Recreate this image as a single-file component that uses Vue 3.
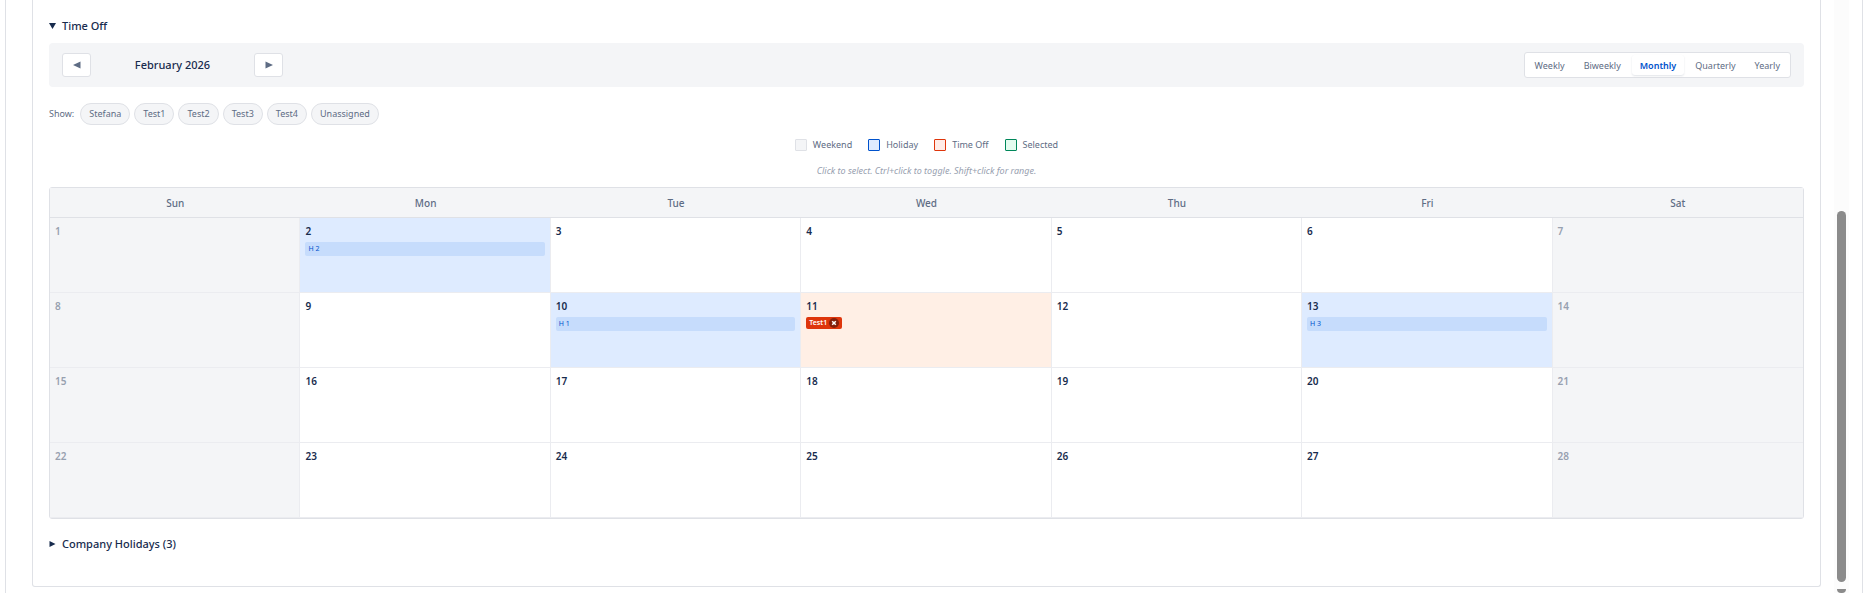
<script setup>
import { ref } from 'vue'

const views = ['Weekly', 'Biweekly', 'Monthly', 'Quarterly', 'Yearly']
const view = ref('Monthly')
const people = ['Stefana', 'Test1', 'Test2', 'Test3', 'Test4', 'Unassigned']
const legend = [
  { label: 'Weekend', kind: 'weekend' },
  { label: 'Holiday', kind: 'holiday' },
  { label: 'Time Off', kind: 'timeoff' },
  { label: 'Selected', kind: 'selected' },
]
const weekdays = ['Sun', 'Mon', 'Tue', 'Wed', 'Thu', 'Fri', 'Sat']
const holidays = { 2: 'H 2', 10: 'H 1', 13: 'H 3' }
const timeOff = ref({ 11: 'Test1' })

const weeks = [0, 1, 2, 3].map((w) => weekdays.map((_, d) => w * 7 + d + 1))

function dayClass(day, column) {
  return {
    weekend: column === 0 || column === 6,
    holiday: day in holidays,
    timeoff: day in timeOff.value,
  }
}
</script>

<template>
  <div class="page">
    <div class="panel">
      <main class="card">
        <details open>
          <summary>
            <svg class="marker" viewBox="0 0 8 8" aria-hidden="true"><path d="M0 1h7L3.5 7z" /></svg>
            Time Off
          </summary>

          <div class="toolbar">
            <div class="period">
              <button class="step" type="button" aria-label="Previous month">
                <svg viewBox="0 0 8 8" aria-hidden="true"><path d="M7.5 0.5v7L0 4z" /></svg>
              </button>
              <span class="month">February 2026</span>
              <button class="step" type="button" aria-label="Next month">
                <svg viewBox="0 0 8 8" aria-hidden="true"><path d="M0.5 0.5v7L8 4z" /></svg>
              </button>
            </div>
            <div class="views">
              <button
                v-for="v in views"
                :key="v"
                type="button"
                :class="{ active: v === view }"
                @click="view = v"
              >{{ v }}</button>
            </div>
          </div>

          <div class="filters">
            <span class="caption">Show:</span>
            <button v-for="p in people" :key="p" class="chip" type="button">{{ p }}</button>
          </div>

          <div class="legend">
            <span v-for="l in legend" :key="l.kind" class="key">
              <i class="swatch" :class="l.kind"></i>{{ l.label }}
            </span>
          </div>
          <p class="hint">Click to select. Ctrl+click to toggle. Shift+click for range.</p>

          <table class="calendar">
            <thead>
              <tr>
                <th v-for="d in weekdays" :key="d" scope="col">{{ d }}</th>
              </tr>
            </thead>
            <tbody>
              <tr v-for="(week, w) in weeks" :key="w">
                <td v-for="(day, c) in week" :key="day" :class="dayClass(day, c)">
                  <div class="number">{{ day }}</div>
                  <div v-if="holidays[day]" class="event">{{ holidays[day] }}</div>
                  <div v-if="timeOff[day]" class="badge">
                    {{ timeOff[day] }}
                    <button type="button" aria-label="Remove time off">
                      <svg viewBox="0 0 10 10" aria-hidden="true"><path d="M3.2 3.2l3.6 3.6M6.8 3.2l-3.6 3.6" /></svg>
                    </button>
                  </div>
                </td>
              </tr>
            </tbody>
          </table>
        </details>

        <details class="company">
          <summary>
            <svg class="marker" viewBox="0 0 8 8" aria-hidden="true"><path d="M0.5 1v6l6-3z" /></svg>
            Company Holidays (3)
          </summary>
        </details>
      </main>

      <div class="scroll" aria-hidden="true">
        <div class="thumb"></div>
        <div class="down"></div>
      </div>
    </div>
  </div>
</template>

<style>
body {
  margin: 0;
  overflow: hidden;
  background: #fff;
}
</style>

<style scoped>
.page {
  box-sizing: border-box;
  height: 100vh;
  padding: 0 3px 0 5px;
  font-family: "Noto Sans", "Open Sans", sans-serif;
  font-size: 9px;
  line-height: 14px;
  color: #5e6c84;
}
button {
  font: inherit;
  color: inherit;
  cursor: pointer;
}
.panel {
  box-sizing: border-box;
  display: flex;
  height: 100%;
  border: solid #dfe1e6;
  border-width: 0 1px;
  padding: 0 13px 0 26px;
}
.card {
  box-sizing: border-box;
  flex: 1;
  align-self: flex-start;
  border: 1px solid #dfe1e6;
  border-top: 0;
  border-radius: 0 0 3px 3px;
  padding: 18px 16px 34px;
}
summary {
  display: flex;
  align-items: center;
  gap: 5px;
  height: 16px;
  list-style: none;
  font-size: 11px;
  font-weight: 500;
  color: #172b4d;
  cursor: pointer;
}
.marker {
  width: 8px;
  height: 8px;
  fill: #172b4d;
}
.toolbar {
  display: flex;
  justify-content: space-between;
  align-items: center;
  margin-top: 9px;
  padding: 9px 13px;
  border-radius: 4px;
  background: #f4f5f7;
}
.period {
  display: flex;
  align-items: center;
  gap: 12px;
}
.step {
  display: flex;
  align-items: center;
  justify-content: center;
  width: 29px;
  height: 24px;
  padding: 0;
  border: 1px solid #dfe1e6;
  border-radius: 3px;
  background: #fff;
}
.step svg {
  width: 8px;
  height: 8px;
  fill: #5e6c84;
}
.month {
  width: 139px;
  text-align: center;
  font-size: 11px;
  font-weight: 500;
  color: #172b4d;
}
.views {
  display: flex;
  gap: 3px;
  padding: 2px;
  border: 1px solid #dfe1e6;
  border-radius: 3px;
  background: #fff;
}
.views button {
  height: 20px;
  padding: 1px 8px 0;
  border: 0;
  border-radius: 3px;
  background: none;
}
.views .active {
  font-weight: 600;
  color: #0052cc;
  background: #fff;
  box-shadow: 0 1px 2px rgba(9, 30, 66, 0.12);
}
.filters {
  display: flex;
  align-items: center;
  gap: 4px;
  margin-top: 16px;
}
.caption {
  margin-right: 2px;
}
.chip {
  height: 22px;
  padding: 0 8px;
  border: 1px solid #dfe1e6;
  border-radius: 11px;
  background: #f4f5f7;
}
.legend {
  display: flex;
  justify-content: center;
  gap: 16px;
  margin-top: 13px;
}
.key {
  display: flex;
  align-items: center;
  gap: 6px;
}
.swatch {
  box-sizing: border-box;
  width: 12px;
  height: 12px;
  border: 1px solid #dfe1e6;
  border-radius: 1px;
  background: #f4f5f7;
}
.swatch.holiday {
  border-color: #0052cc;
  background: #deebff;
}
.swatch.timeoff {
  border-color: #de350b;
  background: #ffebe6;
}
.swatch.selected {
  border-color: #00875a;
  background: #e3fcef;
}
.hint {
  margin: 12px 0 9px;
  text-align: center;
  font-style: italic;
  color: #97a0af;
}
.calendar {
  width: 100%;
  table-layout: fixed;
  border-collapse: separate;
  border-spacing: 0;
  border: 1px solid #dfe1e6;
  border-radius: 3px;
}
th {
  box-sizing: border-box;
  height: 30px;
  padding: 0;
  border-bottom: 1px solid #dfe1e6;
  background: #f4f5f7;
  font-size: 10px;
  font-weight: 500;
}
td {
  box-sizing: border-box;
  height: 75px;
  padding: 6px 5px 0;
  border: solid #ebecf0;
  border-width: 0 1px 1px 0;
  vertical-align: top;
  background: #fff;
}
td:last-child {
  border-right: 0;
}
.number {
  font-size: 10px;
  font-weight: 600;
  color: #172b4d;
}
td.weekend {
  background: #f4f5f7;
}
td.weekend .number {
  color: #97a0af;
}
td.holiday {
  background: #deebff;
}
td.timeoff {
  background: #ffefe5;
}
.event {
  margin-top: 4px;
  padding: 0 3px;
  border-radius: 2px;
  background: #c6dcfc;
  font-size: 7px;
  color: #0052cc;
}
.badge {
  display: flex;
  align-items: center;
  gap: 2px;
  width: max-content;
  height: 12px;
  margin-top: 4px;
  padding: 0 3px;
  border-radius: 2px;
  background: #de350b;
  font-size: 7px;
  font-weight: 600;
  color: #fff;
}
.badge button {
  display: flex;
  width: 10px;
  height: 10px;
  padding: 0;
  border: 0;
  border-radius: 50%;
  background: #85200a;
}
.badge svg {
  width: 10px;
  height: 10px;
  fill: none;
  stroke: #fff;
  stroke-width: 1.5;
}
.company {
  margin-top: 17px;
}
.scroll {
  display: flex;
  flex-direction: column;
  align-items: center;
  width: 15px;
  margin-left: 13px;
  background: #fcfcfc;
}
.thumb {
  flex: 1;
  width: 9px;
  margin-top: 211px;
  border-radius: 5px;
  background: #8b8b8b;
}
.down {
  width: 9px;
  height: 4px;
  margin-top: 7px;
  border-radius: 0 0 4px 4px;
  background: #8b8b8b;
}
</style>
